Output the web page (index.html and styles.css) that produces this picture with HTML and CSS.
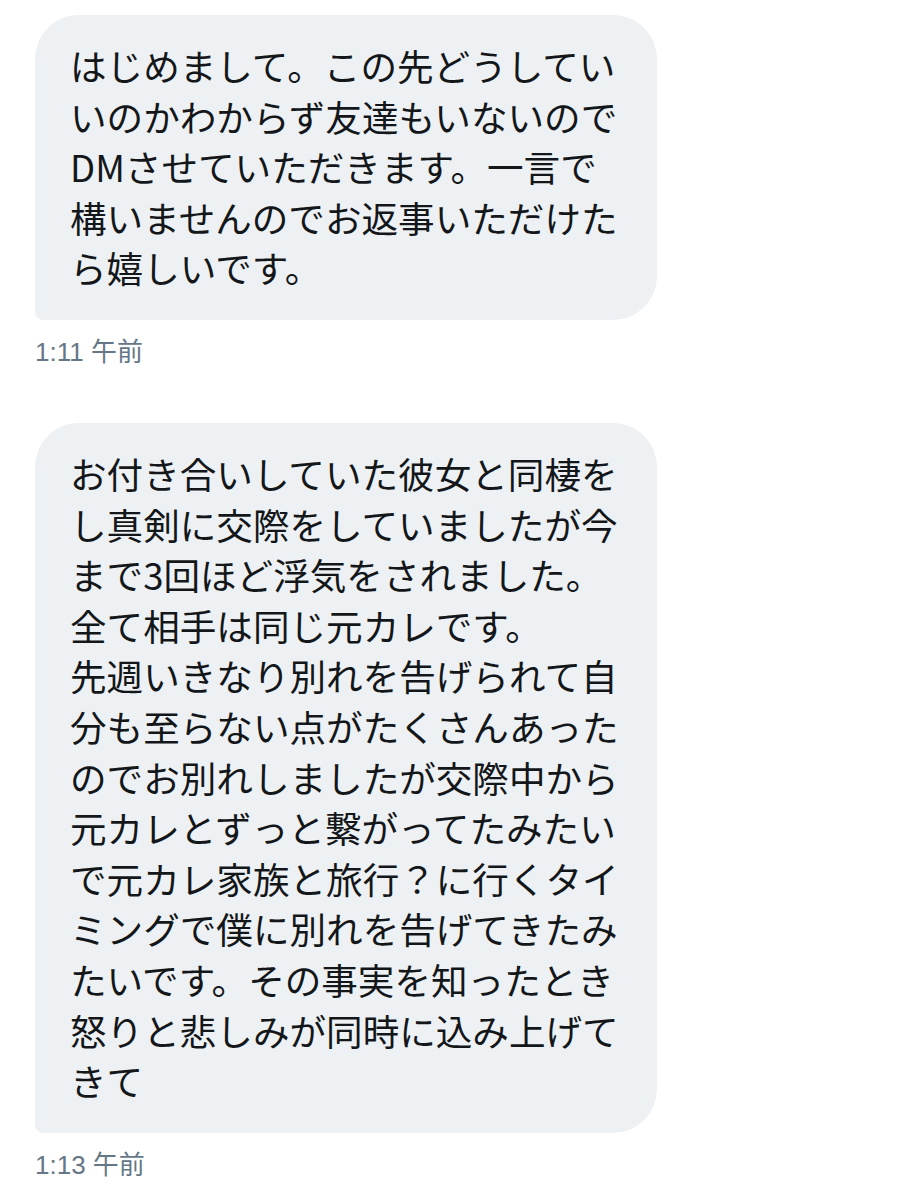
FILE: index.html
```html
<!DOCTYPE html>
<html lang="ja">
<head>
  <meta charset="UTF-8" />
  <meta name="viewport" content="width=device-width, initial-scale=1.0" />
  <title>メッセージ</title>
  <link rel="stylesheet" href="styles.css">
</head>
<body>
  <div class="conversation">
    <div class="message">
      <div class="bubble">
        はじめまして。この先どうしてい<br>
        いのかわからず友達もいないので<br>
        DMさせていただきます。一言で<br>
        構いませんのでお返事いただけた<br>
        ら嬉しいです。
      </div>
      <div class="time">1:11 午前</div>
    </div>

    <div class="message">
      <div class="bubble">
        お付き合いしていた彼女と同棲を<br>
        し真剣に交際をしていましたが今<br>
        まで3回ほど浮気をされました。<br>
        全て相手は同じ元カレです。<br>
        先週いきなり別れを告げられて自<br>
        分も至らない点がたくさんあった<br>
        のでお別れしましたが交際中から<br>
        元カレとずっと繋がってたみたい<br>
        で元カレ家族と旅行？に行くタイ<br>
        ミングで僕に別れを告げてきたみ<br>
        たいです。その事実を知ったとき<br>
        怒りと悲しみが同時に込み上げて<br>
        きて
      </div>
      <div class="time">1:13 午前</div>
    </div>
  </div>
</body>
</html>
```

FILE: styles.css
```css
body {
  margin: 0;
  padding: 0;
  background-color: #ffffff;
  font-family: "Noto Sans CJK JP", "Noto Sans", sans-serif;
}

.conversation {
  padding: 15px 0 0 35px;
  display: flex;
  flex-direction: column;
  gap: 55px;
}

.message {
  display: flex;
  flex-direction: column;
  align-items: flex-start;
}

.bubble {
  width: 551px;
  padding: 26px 36px 26px 35px;
  background-color: #eef1f3;
  color: #14171a;
  font-size: 36.6px;
  line-height: 50.6px;
  border-radius: 44px 44px 44px 8px;
  white-space: nowrap;
}

.time {
  margin-top: 16px;
  font-family: "Liberation Sans", "Noto Sans CJK JP", sans-serif;
  font-size: 26px;
  line-height: 32px;
  color: #657786;
}
```
